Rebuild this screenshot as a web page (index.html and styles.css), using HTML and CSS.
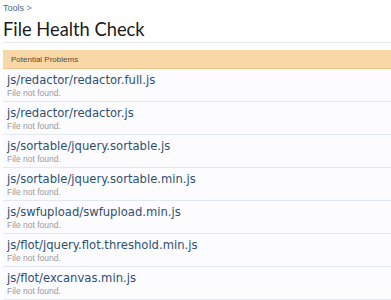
FILE: index.html
```html
<!DOCTYPE html>
<html lang="en">
<head>
  <meta charset="UTF-8" />
  <title>File Health Check</title>
  <link rel="stylesheet" href="styles.css">
</head>
<body>
  <div class="page">
    <div class="breadcrumb"><a href="#">Tools</a> &gt;</div>
    <h1 class="title">File Health Check</h1>

    <div class="section">
      <h3 class="section-head">Potential Problems</h3>
      <ol class="problems">
        <li class="problem">
          <div class="file">js/redactor/redactor.full.js</div>
          <div class="reason">File not found.</div>
        </li>
        <li class="problem">
          <div class="file">js/redactor/redactor.js</div>
          <div class="reason">File not found.</div>
        </li>
        <li class="problem">
          <div class="file">js/sortable/jquery.sortable.js</div>
          <div class="reason">File not found.</div>
        </li>
        <li class="problem">
          <div class="file">js/sortable/jquery.sortable.min.js</div>
          <div class="reason">File not found.</div>
        </li>
        <li class="problem">
          <div class="file">js/swfupload/swfupload.min.js</div>
          <div class="reason">File not found.</div>
        </li>
        <li class="problem">
          <div class="file">js/flot/jquery.flot.threshold.min.js</div>
          <div class="reason">File not found.</div>
        </li>
        <li class="problem">
          <div class="file">js/flot/excanvas.min.js</div>
          <div class="reason">File not found.</div>
        </li>
      </ol>
    </div>
  </div>
</body>
</html>
```

FILE: styles.css
```css
body {
  margin: 0;
  background: #fff;
  font-family: 'Liberation Sans', sans-serif;
  color: #222;
}
.page {
  padding: 0 0 0 3px;
}
.breadcrumb {
  font-size: 9px;
  color: #6b7f95;
  padding-top: 3px;
  height: 11px;
  line-height: 11px;
}
.breadcrumb a {
  color: #4a6a8a;
  text-decoration: none;
}
.title {
  margin: 0;
  font-family: 'Lato', sans-serif;
  font-weight: 400;
  font-size: 18.3px;
  line-height: 26px;
  height: 26px;
  padding-top: 2px;
  border-bottom: 1px solid #e3ebf2;
  color: #1a1a1a;
}
.section {
  margin-top: 7px;
}
.section-head {
  margin: 0;
  background: #f9d8a8;
  border-bottom: 1px solid #eec48c;
  font-weight: 400;
  font-size: 8px;
  color: #5a4a30;
  height: 18px;
  line-height: 19px;
  padding-left: 8px;
}
.problems {
  list-style: none;
  margin: 0;
  padding: 0;
  background: #fcfcff;
}
.problem {
  border-bottom: 1px solid #e2e9ef;
  padding: 4px 0 0 4px;
  height: 28px;
}
.file {
  font-family: 'DejaVu Sans', sans-serif;
  font-size: 11.6px;
  line-height: 15px;
  color: #2f4f6f;
}
.reason {
  font-size: 8.5px;
  line-height: 11px;
  color: #9a9a9a;
}
```
